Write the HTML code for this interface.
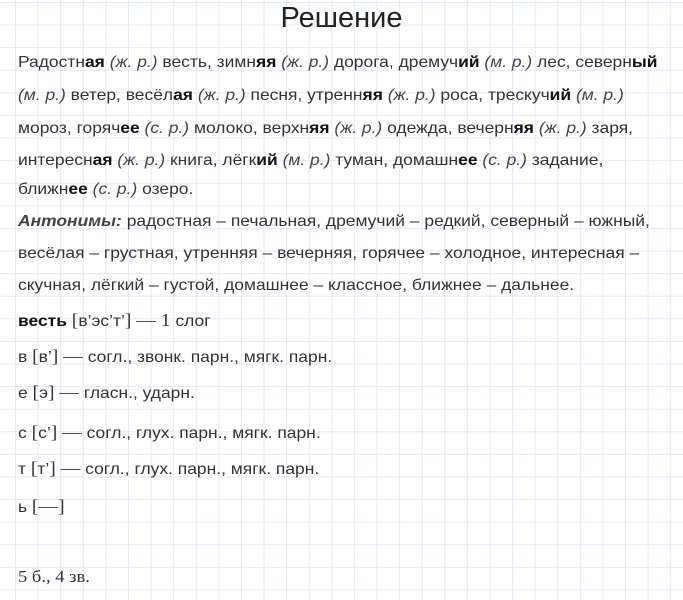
<!DOCTYPE html>
<html><head><meta charset="utf-8"><style>
html,body{margin:0;padding:0}
body{width:683px;height:600px;overflow:hidden;position:relative;background-color:#fff;
background-image:linear-gradient(to right,#e3e9f3 1px,transparent 1px),linear-gradient(to bottom,#e3e9f3 1px,transparent 1px);
background-size:22.6px 22.6px;background-position:15px 2px;
font-family:"Liberation Sans",sans-serif;color:#333;}
.l{position:absolute;left:18px;white-space:nowrap;font-size:16px;line-height:18px;transform:scaleX(1.09);transform-origin:left center}
b{color:#111;font-weight:bold}
i{color:#444}
.t{position:absolute;left:0;width:683px;text-align:center;top:2px;font-size:29px;color:#222}
.s{font-family:"Liberation Serif",serif;font-size:18px}
</style></head><body>
<div class="t">Решение</div>
<div class="l" style="top:54px">Радостн<b>ая</b> <i>(ж. р.)</i> весть, зимн<b>яя</b> <i>(ж. р.)</i> дорога, дремуч<b>ий</b> <i>(м. р.)</i> лес, северн<b>ый</b></div>
<div class="l" style="top:87px"><i>(м. р.)</i> ветер, весёл<b>ая</b> <i>(ж. р.)</i> песня, утренн<b>яя</b> <i>(ж. р.)</i> роса, трескуч<b>ий</b> <i>(м. р.)</i></div>
<div class="l" style="top:120px">мороз, горяч<b>ее</b> <i>(с. р.)</i> молоко, верхн<b>яя</b> <i>(ж. р.)</i> одежда, вечерн<b>яя</b> <i>(ж. р.)</i> заря,</div>
<div class="l" style="top:152px">интересн<b>ая</b> <i>(ж. р.)</i> книга, лёгк<b>ий</b> <i>(м. р.)</i> туман, домашн<b>ее</b> <i>(с. р.)</i> задание,</div>
<div class="l" style="top:181px">ближн<b>ее</b> <i>(с. р.)</i> озеро.</div>
<div class="l" style="top:213px"><b><i>Антонимы:</i></b> радостная – печальная, дремучий – редкий, северный – южный,</div>
<div class="l" style="top:245px">весёлая – грустная, утренняя – вечерняя, горячее – холодное, интересная –</div>
<div class="l" style="top:277px">скучная, лёгкий – густой, домашнее – классное, ближнее – дальнее.</div>
<div class="l" style="top:311px"><b>весть</b> <span class="s">[</span>в’эс’т’<span class="s">] — 1</span> слог</div>
<div class="l" style="top:347px">в <span class="s">[</span>в’<span class="s">] —</span> согл., звонк. парн., мягк. парн.</div>
<div class="l" style="top:383px">е <span class="s">[</span>э<span class="s">] —</span> гласн., ударн.</div>
<div class="l" style="top:423px">с <span class="s">[</span>с’<span class="s">] —</span> согл., глух. парн., мягк. парн.</div>
<div class="l" style="top:459px">т <span class="s">[</span>т’<span class="s">] —</span> согл., глух. парн., мягк. парн.</div>
<div class="l" style="top:497px">ь <span class="s">[—]</span></div>
<div class="l s" style="top:568px;font-size:17px">5 б., 4 зв.</div>
</body></html>
